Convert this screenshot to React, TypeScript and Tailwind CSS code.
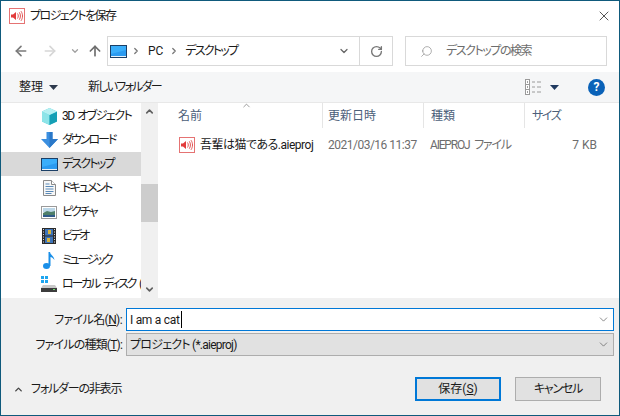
import { ArrowLeft, ArrowRight, ArrowUp, ChevronDown, ChevronRight, ChevronUp, RotateCw, Search, X } from "lucide-react"

const font = "font-['Roboto','Noto_Sans_CJK_JP',sans-serif] [font-feature-settings:'palt']"

function SpeakerIcon() {
  return (
    <svg width="16" height="16" viewBox="0 0 16 16" className="shrink-0">
      <rect x="0.5" y="0.5" width="15" height="15" fill="#fff" stroke="#e57373" />
      <path d="M2 6.500h2L7 4v8L4 9.500H2z" fill="#e23b3b" />
      <path d="M8.500 5.500c1 1.500 1 3.500 0 5M10.300 4.300c1.500 2.200 1.500 5.200 0 7.400M12 3.200c2 3 2 6.600 0 9.600" fill="none" stroke="#e25555" />
    </svg>
  )
}

function DesktopIcon() {
  return (
    <svg width="17" height="13" viewBox="0 0 17 13" className="shrink-0">
      <rect x="0" y="0" width="17" height="13" fill="#1b3f66" />
      <rect x="1" y="1" width="15" height="10" fill="#2a9af0" />
      <path d="M1 1h15v4L1 9z" fill="#3aaefa" />
      <rect x="1" y="11" width="15" height="1" fill="#e8f3fb" />
    </svg>
  )
}

function CubeIcon() {
  return (
    <svg width="17" height="17" viewBox="0 0 17 17">
      <path d="M8.500 0L16 3.500v10L8.500 17 1 13.500v-10z" fill="#52cfd8" />
      <path d="M1 3.500L8.500 7v10L1 13.500z" fill="#8de4e8" />
      <path d="M16 3.500L8.500 7v10L16 13.500z" fill="#159fb5" />
      <path d="M8.500 0L16 3.500 8.500 7 1 3.500z" fill="#b6f0f2" />
    </svg>
  )
}

function DownloadIcon() {
  return (
    <svg width="17" height="16" viewBox="0 0 17 16">
      <path d="M5.500 0h6v7H17l-8.500 9L0 7h5.500z" fill="#3b8fe0" />
      <path d="M8.500 0h3v7H17l-8.500 9z" fill="#2a78c8" />
    </svg>
  )
}

function DocIcon() {
  return (
    <svg width="13" height="16" viewBox="0 0 13 16">
      <path d="M.5.5h8l4 4v11H.5z" fill="#f7f7f7" stroke="#8a8a8a" />
      <path d="M2.500 4h4M2.500 6.500h8M2.500 9h8M2.500 11.500h8M2.500 13.500h6" stroke="#5a8ab8" />
      <path d="M8.500.5v4h4" fill="#fff" stroke="#8a8a8a" />
    </svg>
  )
}

function PictureIcon() {
  return (
    <svg width="16" height="13" viewBox="0 0 16 13">
      <rect x=".5" y=".5" width="15" height="12" fill="#fff" stroke="#9a9a9a" />
      <rect x="2" y="2" width="12" height="4" fill="#bcd7e8" />
      <path d="M2 7l4-2 4 1 4-1v6H2z" fill="#4f7f6a" />
      <rect x="2" y="9" width="12" height="2" fill="#2f5a8a" />
    </svg>
  )
}

function VideoIcon() {
  return (
    <svg width="14" height="16" viewBox="0 0 14 16">
      <rect width="14" height="16" fill="#2b2b2b" />
      <rect x="3" y="1" width="8" height="6.500" fill="#3e74b8" />
      <rect x="3" y="8.500" width="8" height="6.500" fill="#3e74b8" />
      <rect x="6" y="2" width="3" height="4" fill="#d6b23c" />
      <rect x="5" y="10" width="3" height="4" fill="#d6b23c" />
      <path d="M1 1.500h1M1 4h1M1 6.500h1M1 9h1M1 11.500h1M1 14h1M12 1.500h1M12 4h1M12 6.500h1M12 9h1M12 11.500h1M12 14h1" stroke="#ddd" />
    </svg>
  )
}

function MusicIcon() {
  return (
    <svg width="12" height="17" viewBox="0 0 12 17">
      <ellipse cx="3.500" cy="14" rx="3.500" ry="3" fill="#1a8fe8" />
      <path d="M5.500 14V0h1.500c.5 3 4 4 4.500 8-1.500-2-3-3-4-3v9z" fill="#1a8fe8" />
    </svg>
  )
}

function DiskIcon() {
  return (
    <svg width="16" height="16" viewBox="0 0 16 16">
      <rect x="0" y="0" width="3" height="3" fill="#1ea5ef" />
      <rect x="4" y="0" width="3" height="3" fill="#1ea5ef" />
      <rect x="0" y="4" width="3" height="3" fill="#1ea5ef" />
      <rect x="4" y="4" width="3" height="3" fill="#1ea5ef" />
      <path d="M2 9h12l2 3H0z" fill="#c9c9c9" />
      <rect x="0" y="12" width="16" height="4" fill="#3c3c3c" />
      <rect x="12" y="13" width="2" height="1" fill="#6fe06f" />
    </svg>
  )
}

function ViewIcon() {
  return (
    <svg width="16" height="16" viewBox="0 0 16 16">
      <rect x=".5" y=".5" width="4" height="15" fill="#fff" stroke="#9a9a9a" />
      <path d="M.5 5.500h4M.5 10.500h4" stroke="#9a9a9a" />
      <path d="M2 3h1M2 8h1M2 13h1" stroke="#444" />
      <path d="M7 3h3M12 3h4M7 8h3M12 8h4M7 13h3M12 13h4" stroke="#9a9a9a" />
    </svg>
  )
}

function Caret({ color = "#333" }: { color?: string }) {
  return (
    <svg width="9" height="5" viewBox="0 0 9 5">
      <path d="M0 0h9L4.500 5z" fill={color} />
    </svg>
  )
}

const navItems = [
  { label: "3D オブジェクト", icon: <CubeIcon />, track: "tracking-[-1.5px] [word-spacing:2px]" },
  { label: "ダウンロード", icon: <DownloadIcon />, track: "tracking-[-2px]" },
  { label: "デスクトップ", icon: <DesktopIcon />, track: "tracking-[-1.8px]", selected: true },
  { label: "ドキュメント", icon: <DocIcon />, track: "tracking-[-2px]" },
  { label: "ピクチャ", icon: <PictureIcon />, track: "tracking-[-2px]" },
  { label: "ビデオ", icon: <VideoIcon />, track: "tracking-[-2.5px]" },
  { label: "ミュージック", icon: <MusicIcon />, track: "tracking-[-2.4px]" },
  { label: "ローカル ディスク (", icon: <DiskIcon />, track: "tracking-[-2.2px] [word-spacing:3px]" },
]

export default function App() {
  return (
    <div className={`${font} flex h-[416px] w-[620px] flex-col overflow-hidden border border-[#0f5a7c] bg-white text-[12px] text-[#1a1a1a]`}>
      {/* title bar */}
      <div className="flex h-[29px] shrink-0 items-center pl-[8px]">
        <SpeakerIcon />
        <span className="ml-[5px] text-[12px] tracking-[-1.55px]">プロジェクトを保存</span>
        <X className="ml-auto mr-[7px] size-[16px] text-black" strokeWidth={1} />
      </div>

      {/* address row */}
      <div className="flex h-[42px] shrink-0 items-center">
        <ArrowLeft className="ml-[12px] size-[16px] text-[#7a7a7a]" strokeWidth={2.5} />
        <ArrowRight className="ml-[13px] size-[16px] text-[#d6d6d6]" strokeWidth={2.5} />
        <ChevronDown className="ml-[12px] size-[10px] text-[#a0a0a0]" strokeWidth={3} />
        <ArrowUp className="ml-[7px] size-[16px] text-[#6e6e6e]" strokeWidth={2.5} />
        <div className="ml-[4px] flex h-[30px] w-[286px] items-center border border-[#d9d9d9] pl-[2px]">
          <DesktopIcon />
          <ChevronRight className="ml-[4px] size-[10px] text-[#777]" strokeWidth={3} />
          <span className="ml-[7px]">PC</span>
          <ChevronRight className="ml-[6px] size-[10px] text-[#777]" strokeWidth={3} />
          <span className="ml-[6px] tracking-[-1.8px]">デスクトップ</span>
          <ChevronDown className="ml-auto mr-[9px] size-[12px] text-[#666]" strokeWidth={2.5} />
          <div className="flex h-full w-[33px] items-center justify-center border-l border-[#d9d9d9]">
            <RotateCw className="size-[13px] text-[#777]" strokeWidth={2.5} />
          </div>
        </div>
        <div className="ml-[12px] flex h-[30px] w-[202px] items-center border border-[#d9d9d9] pl-[14px] text-[#6d6d6d]">
          <Search className="size-[13px] -scale-x-100 text-[#8a8a8a]" strokeWidth={1.25} />
          <span className="ml-[13px] tracking-[-1.45px]">デスクトップの検索</span>
        </div>
      </div>

      {/* toolbar */}
      <div className="flex h-[31px] shrink-0 items-center border-b border-[#e8e8e8] bg-[#f5f6f7] pl-[18px]">
        <span>整理</span>
        <span className="ml-[6px] flex"><Caret color="#2d3a4d" /></span>
        <span className="ml-[30px] tracking-[-1.75px]">新しいフォルダー</span>
        <span className="ml-auto flex"><ViewIcon /></span>
        <span className="ml-[9px] flex"><Caret color="#1f3a60" /></span>
        <span className="ml-[29px] mr-[14px] flex size-[17px] items-center justify-center rounded-full bg-[#0a62b8] text-[12px] font-bold text-white">?</span>
      </div>

      {/* browser */}
      <div className="flex min-h-0 flex-1">
        <div className="w-[140px] shrink-0 overflow-hidden pt-[1px]">
          {navItems.map((item) => (
            <div
              key={item.label}
              className={`flex h-[24px] items-center whitespace-nowrap ${item.selected ? "bg-[#d9d9d9]" : ""}`}
            >
              <span className="ml-[38px] flex w-[20px] shrink-0 justify-center">{item.icon}</span>
              <span className={`ml-[3px] ${item.track}`}>{item.label}</span>
            </div>
          ))}
        </div>
        <div className="flex w-[17px] shrink-0 flex-col bg-[#f0f0f0]">
          <div className="flex h-[17px] items-center justify-center">
            <ChevronUp className="size-[11px] text-[#606060]" strokeWidth={3.5} />
          </div>
          <div className="mt-[64px] h-[38px] bg-[#cdcdcd]" />
          <div className="mt-auto flex h-[17px] items-center justify-center">
            <ChevronDown className="size-[11px] text-[#606060]" strokeWidth={3.5} />
          </div>
        </div>
        <div className="min-w-0 flex-1 pl-[1px]">
          <div className="relative flex h-[25px] text-[#4c607a]">
            <ChevronUp className="absolute left-[82px] top-[-3px] size-[11px] text-[#707070]" strokeWidth={1.5} />
            <div className="flex w-[164px] items-center border-r border-[#e5e5e5] pl-[19px]">名前</div>
            <div className="flex w-[101px] items-center border-r border-[#e5e5e5] pl-[5px]">更新日時</div>
            <div className="flex w-[101px] items-center border-r border-[#e5e5e5] pl-[7px]">種類</div>
            <div className="flex flex-1 items-center pl-[7px] tracking-[-1.5px]">サイズ</div>
          </div>
          <div className="mt-[6px] flex h-[22px] items-center">
            <div className="flex w-[164px] items-center whitespace-nowrap pl-[20px]">
              <SpeakerIcon />
              <span className="ml-[5px] tracking-[-0.5px]">吾輩は猫である.aieproj</span>
            </div>
            <div className="w-[101px] whitespace-nowrap pl-[5px] tracking-[-0.5px] text-[#6d6d6d]">2021/03/16 11:37</div>
            <div className="w-[101px] whitespace-nowrap pl-[6px] tracking-[-1.2px] text-[#6d6d6d] [word-spacing:3px]">AIEPROJ ファイル</div>
            <div className="w-[72px] text-right text-[#6d6d6d]">7 KB</div>
          </div>
        </div>
      </div>

      {/* footer */}
      <div className="flex h-[117px] shrink-0 flex-col bg-[#f0f0f0] pt-[10px]">
        <div className="flex h-[23px] items-center">
          <span className="w-[121px] text-right tracking-[-0.6px]">ファイル名(<span className="underline">N</span>):</span>
          <div className="ml-[4px] flex h-[23px] w-[488px] items-center border border-[#0078d7] bg-white pl-[3px]">
            <span className="tracking-[-0.3px]">I am a cat</span>
            <span className="ml-[1px] h-[17px] w-[1px] bg-black" />
            <ChevronDown className="ml-auto mr-[3px] size-[13px] text-[#555]" strokeWidth={1.25} />
          </div>
        </div>
        <div className="mt-[2px] flex h-[23px] items-center">
          <span className="w-[121px] text-right tracking-[-0.8px]">ファイルの種類(<span className="underline">T</span>):</span>
          <div className="ml-[4px] flex h-[23px] w-[488px] items-center border border-[#adadad] bg-[#e1e1e1] pl-[3px]">
            <span className="tracking-[-0.75px]">プロジェクト (*.aieproj)</span>
            <ChevronDown className="ml-auto mr-[3px] size-[13px] text-[#555]" strokeWidth={1.25} />
          </div>
        </div>
        <div className="mt-[21px] flex items-center">
          <ChevronUp className="ml-[12px] size-[11px] text-[#444]" strokeWidth={3} />
          <span className="ml-[7px] tracking-[-1.2px]">フォルダーの非表示</span>
          <button className="ml-auto flex h-[24px] w-[86px] items-center justify-center border-2 border-[#0078d7] bg-[#e1e1e1]">保存(<span className="underline">S</span>)</button>
          <button className="ml-[14px] mr-[18px] flex h-[24px] w-[86px] items-center justify-center border border-[#adadad] bg-[#e1e1e1] tracking-[-1.2px]">キャンセル</button>
        </div>
      </div>
    </div>
  )
}
